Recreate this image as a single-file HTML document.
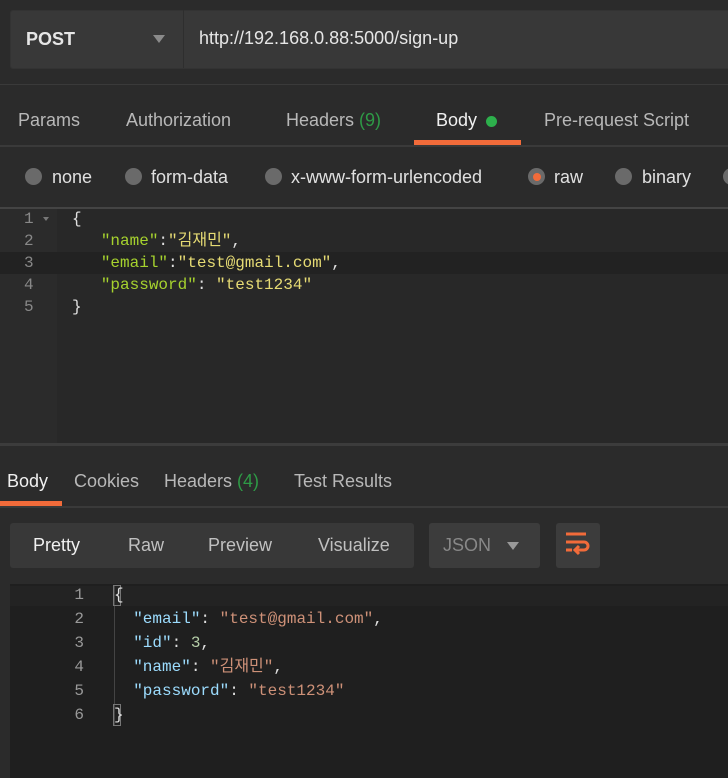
<!DOCTYPE html>
<html><head><meta charset="utf-8"><style>
body{margin:0;width:728px;height:778px;background:#2b2b2b;overflow:hidden;position:relative;font-family:"Liberation Sans","Noto Sans CJK KR",sans-serif;color:#c8c8c8}
.a{position:absolute;white-space:nowrap}
pre.a{white-space:pre}
.m{font-family:"Liberation Mono","Noto Sans CJK KR",monospace;font-size:16px}
.rd{position:absolute;width:17px;height:17px;border-radius:50%;background:#6a6a6a;top:168px}
</style></head><body>
<div class="a" style="left:10px;top:10px;width:720px;height:57px;background:#383838;border:1px solid #333;border-radius:3px"></div>
<div class="a" style="left:183px;top:10px;width:1px;height:58px;background:#2e2e2e"></div>
<div class="a" style="left:26px;top:29px;font-size:18px;font-weight:bold;color:#e6e6e6">POST</div>
<div class="a" style="left:153px;top:35px;width:0;height:0;border-left:6px solid transparent;border-right:6px solid transparent;border-top:8px solid #8a8a8a"></div>
<div class="a" style="left:199px;top:28px;font-size:18px;color:#e6e6e6">http://192.168.0.88:5000/sign-up</div>
<div class="a" style="left:0;top:84px;width:728px;height:1px;background:#3a3a3a"></div>
<div class="a" style="left:18px;top:110px;font-size:18px;color:#b8b8b8">Params</div>
<div class="a" style="left:126px;top:110px;font-size:18px;color:#b8b8b8">Authorization</div>
<div class="a" style="left:286px;top:110px;font-size:18px;color:#b8b8b8">Headers <span style="color:#2e9a46">(9)</span></div>
<div class="a" style="left:436px;top:110px;font-size:18px;color:#f0f0f0">Body</div>
<div class="a" style="left:486px;top:116px;width:11px;height:11px;border-radius:50%;background:#2db04c"></div>
<div class="a" style="left:544px;top:110px;font-size:18px;color:#b8b8b8">Pre-request Script</div>
<div class="a" style="left:414px;top:140px;width:107px;height:5px;background:#f26b3a"></div>
<div class="a" style="left:0;top:145px;width:728px;height:2px;background:#3a3a3a"></div>
<div class="rd" style="left:25px"></div><div class="a" style="left:52px;top:167px;font-size:18px;color:#e0e0e0">none</div>
<div class="rd" style="left:125px"></div><div class="a" style="left:151px;top:167px;font-size:18px;color:#e0e0e0">form-data</div>
<div class="rd" style="left:265px"></div><div class="a" style="left:291px;top:167px;font-size:18px;color:#e0e0e0">x-www-form-urlencoded</div>
<div class="rd" style="left:528px"></div><div class="a" style="left:533px;top:173px;width:8px;height:8px;border-radius:50%;background:#f26b3a"></div><div class="a" style="left:554px;top:167px;font-size:18px;color:#e0e0e0">raw</div>
<div class="rd" style="left:615px"></div><div class="a" style="left:642px;top:167px;font-size:18px;color:#e0e0e0">binary</div>
<div class="rd" style="left:723px"></div>
<div class="a" style="left:0;top:207px;width:728px;height:2px;background:#444"></div>
<div class="a" style="left:0;top:209px;width:728px;height:234px;background:#282828"></div>
<div class="a" style="left:0;top:209px;width:57px;height:234px;background:#2b2b2b"></div>
<div class="a" style="left:0;top:252px;width:728px;height:22px;background:#222"></div>
<div class="a m" style="left:24px;top:208px;line-height:22px;color:#888">1<br>2<br>3<br>4<br>5</div>
<div class="a" style="left:43px;top:217px;border-left:3px solid transparent;border-right:3px solid transparent;border-top:4px solid #777"></div>
<pre class="a m" style="left:72px;top:208px;margin:0;line-height:22px;color:#e0e0e0">{
   <span style="color:#a6d22e">"name"</span>:<span style="color:#e6db74">"김재민"</span>,
   <span style="color:#a6d22e">"email"</span>:<span style="color:#e6db74">"test@gmail.com"</span>,
   <span style="color:#a6d22e">"password"</span>: <span style="color:#e6db74">"test1234"</span>
}</pre>
<div class="a" style="left:0;top:443px;width:728px;height:3px;background:#3c3c3c"></div>
<div class="a" style="left:7px;top:471px;font-size:18px;color:#f0f0f0">Body</div>
<div class="a" style="left:74px;top:471px;font-size:18px;color:#b8b8b8">Cookies</div>
<div class="a" style="left:164px;top:471px;font-size:18px;color:#b8b8b8">Headers <span style="color:#2e9a46">(4)</span></div>
<div class="a" style="left:294px;top:471px;font-size:18px;color:#b8b8b8">Test Results</div>
<div class="a" style="left:0;top:501px;width:62px;height:5px;background:#f26b3a"></div>
<div class="a" style="left:0;top:506px;width:728px;height:2px;background:#3a3a3a"></div>
<div class="a" style="left:10px;top:523px;width:404px;height:45px;background:#383838;border-radius:3px"></div>
<div class="a" style="left:33px;top:535px;font-size:18px;color:#f0f0f0">Pretty</div>
<div class="a" style="left:128px;top:535px;font-size:18px;color:#c0c0c0">Raw</div>
<div class="a" style="left:208px;top:535px;font-size:18px;color:#c0c0c0">Preview</div>
<div class="a" style="left:318px;top:535px;font-size:18px;color:#c0c0c0">Visualize</div>
<div class="a" style="left:429px;top:523px;width:111px;height:45px;background:#3c3c3c;border-radius:3px"></div>
<div class="a" style="left:443px;top:535px;font-size:18px;color:#888">JSON</div>
<div class="a" style="left:507px;top:542px;border-left:6px solid transparent;border-right:6px solid transparent;border-top:8px solid #999"></div>
<div class="a" style="left:556px;top:523px;width:44px;height:45px;background:#3c3c3c;border-radius:3px"></div>
<svg class="a" style="left:564px;top:531px" width="28" height="30" viewBox="0 0 28 30"><g fill="none" stroke="#f26b3a" stroke-width="3"><path d="M2 3H22"/><path d="M2 11H20a4 4 0 0 1 0 8H12"/><path d="M15 15l-4 4 4 4"/><path d="M2 19H8"/></g></svg>
<div class="a" style="left:10px;top:584px;width:718px;height:194px;background:#1f1f1f"></div>
<div class="a" style="left:10px;top:586px;width:718px;height:20px;background:#232323"></div>
<div class="a" style="left:114px;top:585px;width:1px;height:140px;background:#444"></div>
<div class="a" style="left:113px;top:585px;width:8px;height:21px;border:1px solid #777;box-sizing:border-box"></div>
<div class="a" style="left:113px;top:704px;width:8px;height:22px;border:1px solid #777;box-sizing:border-box"></div>
<div class="a m" style="left:66px;top:583px;line-height:24px;color:#999;text-align:right;width:18px">1<br>2<br>3<br>4<br>5<br>6</div>
<pre class="a m" style="left:114px;top:583px;margin:0;line-height:24px;color:#e0e0e0">{
  <span style="color:#9cdcfe">"email"</span>: <span style="color:#ce9178">"test@gmail.com"</span>,
  <span style="color:#9cdcfe">"id"</span>: <span style="color:#b5cea8">3</span>,
  <span style="color:#9cdcfe">"name"</span>: <span style="color:#ce9178">"김재민"</span>,
  <span style="color:#9cdcfe">"password"</span>: <span style="color:#ce9178">"test1234"</span>
}</pre>
</body></html>
